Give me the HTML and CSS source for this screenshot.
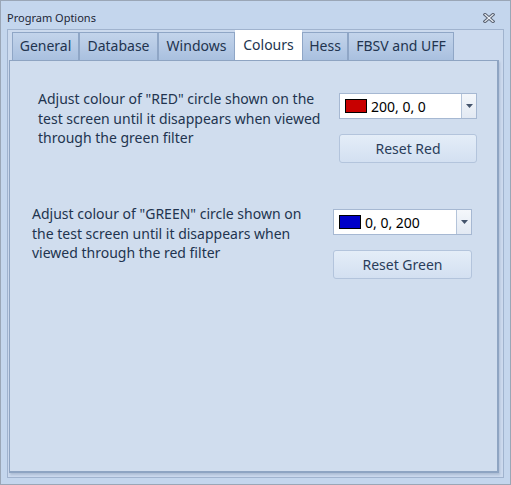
FILE: index.html
```html
<!DOCTYPE html>
<html>
<head>
<meta charset="utf-8">
<link rel="stylesheet" href="styles.css">
</head>
<body>
<div class="window">
  <div class="titlebar">
    <span class="title">Program Options</span>
    <svg class="close" width="12" height="10" viewBox="0 0 12 10">
      <path d="M2 1.5 L10 8.5 M10 1.5 L2 8.5" stroke="#5b6474" stroke-width="3.2" stroke-linecap="square"/>
      <path d="M2 1.5 L10 8.5 M10 1.5 L2 8.5" stroke="#eef2f8" stroke-width="1.2" stroke-linecap="square"/>
    </svg>
  </div>
  <div class="frame">
    <div class="tabs">
      <div class="tab t-general">General</div>
      <div class="tab t-database">Database</div>
      <div class="tab t-windows">Windows</div>
      <div class="tab t-colours active">Colours</div>
      <div class="tab t-hess">Hess</div>
      <div class="tab t-fbsv">FBSV and UFF</div>
    </div>
    <div class="panel">
      <div class="row row-red">
        <div class="desc">Adjust colour of "RED" circle shown on the<br>test screen until it disappears when viewed<br>through the green filter</div>
        <div class="controls">
          <div class="combo">
            <span class="swatch swatch-red"></span>
            <span class="combo-text">200, 0, 0</span>
            <span class="drop"><svg width="7" height="4" viewBox="0 0 7 4"><path d="M0 0 H7 L3.5 4 Z" fill="#44546c"/></svg></span>
          </div>
          <div class="btn">Reset Red</div>
        </div>
      </div>
      <div class="row row-green">
        <div class="desc">Adjust colour of "GREEN" circle shown on<br>the test screen until it disappears when<br>viewed through the red filter</div>
        <div class="controls">
          <div class="combo">
            <span class="swatch swatch-blue"></span>
            <span class="combo-text">0, 0, 200</span>
            <span class="drop"><svg width="7" height="4" viewBox="0 0 7 4"><path d="M0 0 H7 L3.5 4 Z" fill="#44546c"/></svg></span>
          </div>
          <div class="btn">Reset Green</div>
        </div>
      </div>
    </div>
  </div>
</div>
</body>
</html>
```
FILE: styles.css
```css
html, body {
  margin: 0;
  padding: 0;
}
body {
  font-family: "Noto Sans", "Open Sans", sans-serif;
  color: #22344f;
}
.window {
  width: 511px;
  height: 485px;
  box-sizing: border-box;
  border: 1px solid #9aa6b6;
  background: #c4d6ed;
  display: flex;
  flex-direction: column;
}
.titlebar {
  height: 28px;
  box-sizing: border-box;
  padding: 10px 15px 0 6px;
  display: flex;
  justify-content: space-between;
  align-items: flex-start;
}
.title {
  font-size: 11px;
  line-height: 14px;
  color: #1c2636;
}
.close {
  margin-top: 2px;
}
.frame {
  flex: 1;
  margin: 0 6px 6px 6px;
  border: 1px solid #a0b3ce;
  background: #ccdaee;
  display: flex;
  flex-direction: column;
}
.tabs {
  height: 30px;
  padding-left: 4px;
  display: flex;
  align-items: flex-end;
}
.tab {
  height: 28px;
  box-sizing: border-box;
  border: 1px solid #8fa6c6;
  border-bottom: none;
  background: linear-gradient(#c3d4eb, #a9c0df);
  font-size: 14px;
  line-height: 26px;
  text-align: center;
  color: #22344f;
}
.tab.active {
  height: 30px;
  line-height: 28px;
  background: #ffffff;
  border-color: #ffffff;
}
.t-general { width: 67px; }
.t-database { width: 79px; }
.t-windows { width: 77px; }
.t-colours { width: 67px; }
.t-hess { width: 46px; }
.t-fbsv { width: 106px; }
.panel {
  flex: 1;
  margin: 0 4px 4px 1px;
  border: 1px solid #8ea4c2;
  border-right-width: 2px;
  border-bottom-width: 2px;
  background: #d0ddee;
  box-shadow: 1px 2px 2px rgba(120, 140, 170, 0.35);
}
.row {
  display: flex;
}
.row-red {
  margin-top: 28px;
  padding-left: 28px;
}
.row-green {
  margin-top: 41px;
  padding-left: 22px;
}
.desc {
  width: 301px;
  font-size: 14px;
  line-height: 19.5px;
  white-space: nowrap;
  color: #22344f;
}
.controls {
  display: flex;
  flex-direction: column;
  gap: 15px;
  margin-top: 4px;
}
.row-red .controls { width: 138px; }
.row-green .controls { width: 139px; margin-top: 5px; }
.combo {
  height: 26px;
  box-sizing: border-box;
  border: 1px solid #a6b8d2;
  background: #ffffff;
  display: flex;
  align-items: center;
  padding-left: 5px;
}
.swatch {
  width: 22px;
  height: 14px;
  box-sizing: border-box;
  border: 1px solid #000000;
  margin-right: 4px;
}
.swatch-red { background: #c80000; }
.swatch-blue { background: #0000c8; }
.combo-text {
  flex: 1;
  font-size: 14px;
  color: #000000;
}
.drop {
  width: 15px;
  height: 24px;
  box-sizing: border-box;
  border-left: 1px solid #b4c4da;
  background: linear-gradient(#f4f7fb, #e2e9f3);
  display: flex;
  align-items: center;
  justify-content: center;
}
.btn {
  height: 29px;
  box-sizing: border-box;
  border: 1px solid #b3c4dc;
  border-radius: 3px;
  background: linear-gradient(#e4edf8, #d3e0f1);
  font-size: 14px;
  line-height: 27px;
  text-align: center;
  color: #2a3d5a;
}
```
